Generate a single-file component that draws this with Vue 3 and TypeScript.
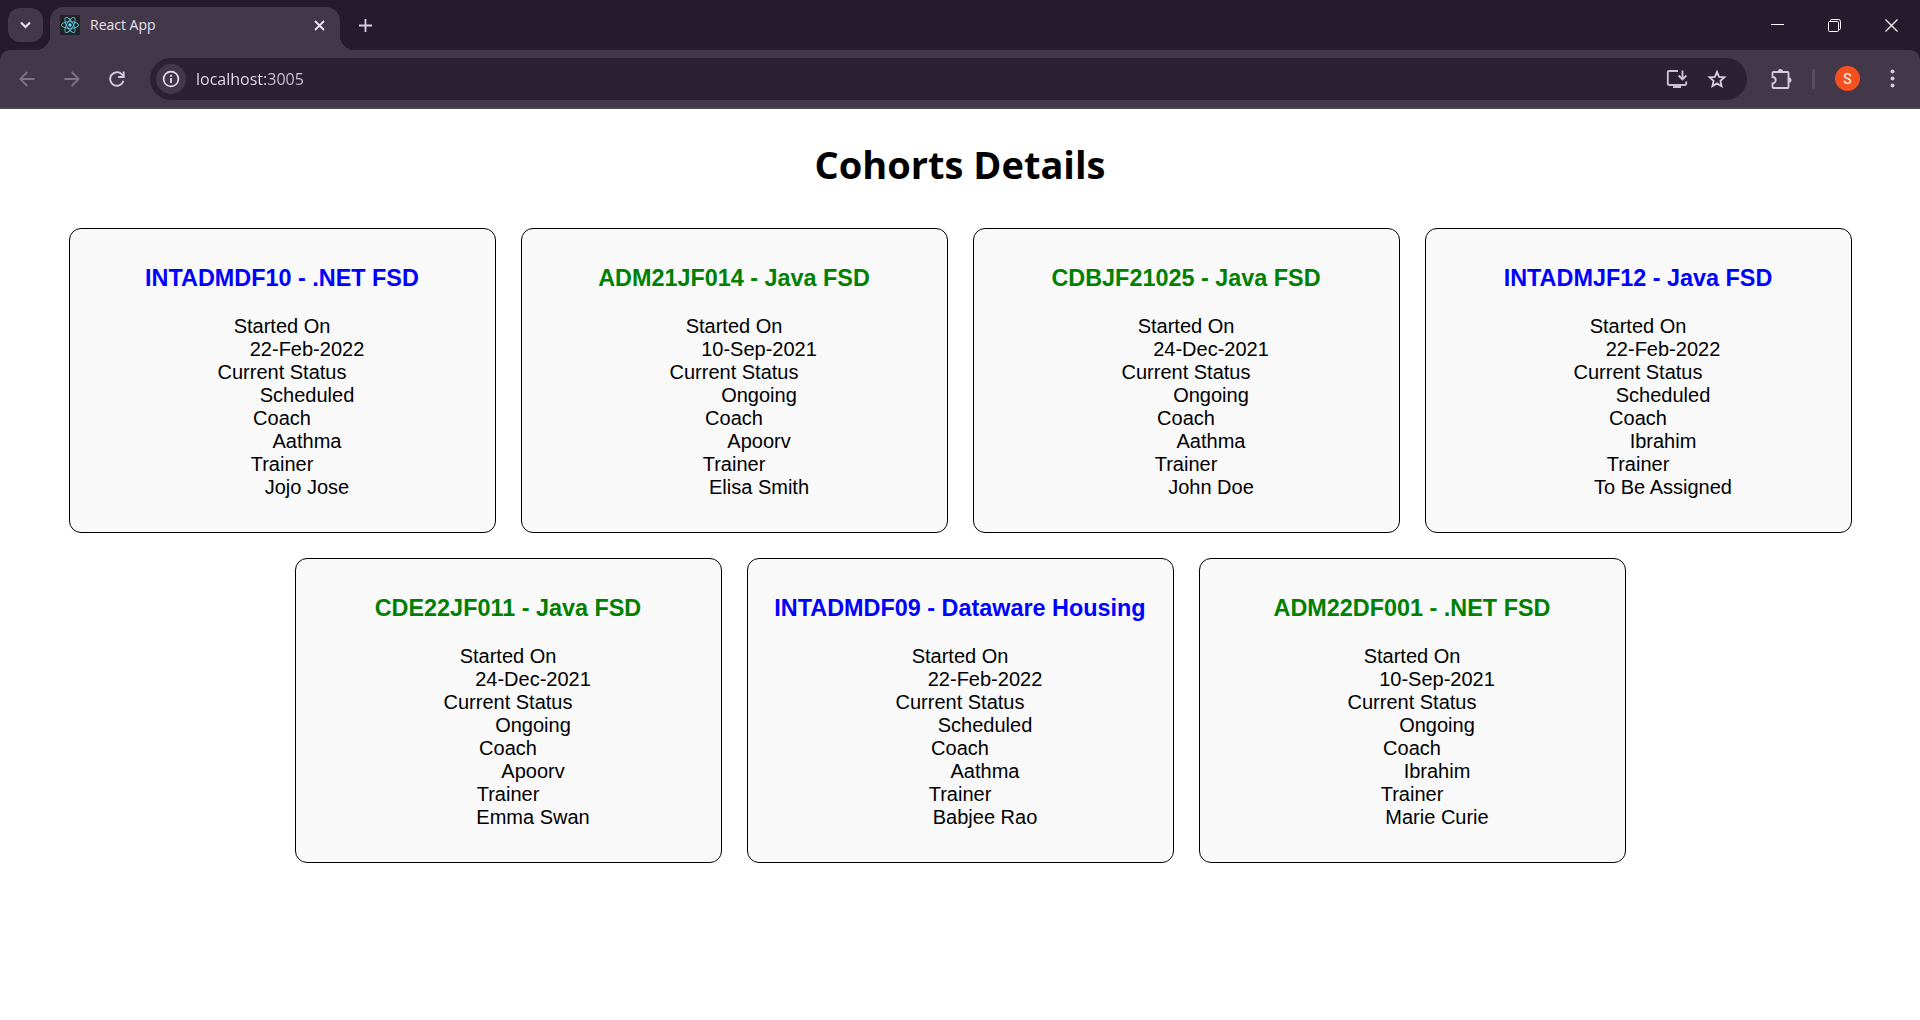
<script setup lang="ts">
import { ref } from 'vue'

interface Cohort {
  code: string
  track: string
  startedOn: string
  status: 'Ongoing' | 'Scheduled'
  coach: string
  trainer: string
}

const address = ref('localhost:3005')

const cohorts: Cohort[] = [
  { code: 'INTADMDF10', track: '.NET FSD', startedOn: '22-Feb-2022', status: 'Scheduled', coach: 'Aathma', trainer: 'Jojo Jose' },
  { code: 'ADM21JF014', track: 'Java FSD', startedOn: '10-Sep-2021', status: 'Ongoing', coach: 'Apoorv', trainer: 'Elisa Smith' },
  { code: 'CDBJF21025', track: 'Java FSD', startedOn: '24-Dec-2021', status: 'Ongoing', coach: 'Aathma', trainer: 'John Doe' },
  { code: 'INTADMJF12', track: 'Java FSD', startedOn: '22-Feb-2022', status: 'Scheduled', coach: 'Ibrahim', trainer: 'To Be Assigned' },
  { code: 'CDE22JF011', track: 'Java FSD', startedOn: '24-Dec-2021', status: 'Ongoing', coach: 'Apoorv', trainer: 'Emma Swan' },
  { code: 'INTADMDF09', track: 'Dataware Housing', startedOn: '22-Feb-2022', status: 'Scheduled', coach: 'Aathma', trainer: 'Babjee Rao' },
  { code: 'ADM22DF001', track: '.NET FSD', startedOn: '10-Sep-2021', status: 'Ongoing', coach: 'Ibrahim', trainer: 'Marie Curie' },
]
</script>

<template>
  <div class="browser">
    <header class="chrome">
      <div class="tab-strip">
        <button class="tab-search" type="button" aria-label="Search tabs">
          <svg width="11" height="8" viewBox="0 0 11 8"><path d="M1 1.5l4.5 4.5L10 1.5" fill="none" stroke="#e9dff0" stroke-width="2.2" /></svg>
        </button>
        <div class="tab">
          <svg class="favicon" width="20" height="20" viewBox="0 0 20 20">
            <rect width="20" height="20" rx="1" fill="#222324" />
            <g fill="none" stroke="#5cc4de" stroke-width="0.9">
              <ellipse cx="10" cy="10" rx="8.6" ry="3.3" />
              <ellipse cx="10" cy="10" rx="8.6" ry="3.3" transform="rotate(60 10 10)" />
              <ellipse cx="10" cy="10" rx="8.6" ry="3.3" transform="rotate(120 10 10)" />
            </g>
            <circle cx="10" cy="10" r="1.7" fill="#61dafb" />
          </svg>
          <span class="tab-title">React App</span>
          <button class="tab-close" type="button" aria-label="Close tab">
            <svg width="11" height="11" viewBox="0 0 11 11"><path d="M1 1l9 9M10 1l-9 9" fill="none" stroke="#ece6f0" stroke-width="1.8" /></svg>
          </button>
        </div>
        <button class="new-tab" type="button" aria-label="New tab">
          <svg width="13" height="13" viewBox="0 0 13 13"><path d="M6.5 0v13M0 6.5h13" fill="none" stroke="#dccbe6" stroke-width="1.8" /></svg>
        </button>
        <div class="window-controls">
          <button type="button" aria-label="Minimize">
            <svg width="13" height="13" viewBox="0 0 13 13"><path d="M0 5.5h13" stroke="#fff" /></svg>
          </button>
          <button type="button" aria-label="Restore">
            <svg width="13" height="13" viewBox="0 0 13 13" fill="none" stroke="#fff">
              <rect x="0.5" y="2.5" width="10" height="10" rx="1" />
              <path d="M2.5 2V1.5a1 1 0 0 1 1-1h7a2 2 0 0 1 2 2v7a1 1 0 0 1-1 1h-1" />
            </svg>
          </button>
          <button type="button" aria-label="Close">
            <svg width="13" height="13" viewBox="0 0 13 13"><path d="M0.5 0.5l12 12M12.5 0.5l-12 12" stroke="#fff" stroke-width="1.2" /></svg>
          </button>
        </div>
      </div>

      <div class="toolbar">
        <button class="tool" type="button" aria-label="Back">
          <svg width="16" height="16" viewBox="0 0 16 16" fill="none" stroke="#7e7487" stroke-width="1.8"><path d="M15.500 8H1.500M8.300 1L1.300 8l7 7" /></svg>
        </button>
        <button class="tool" type="button" aria-label="Forward">
          <svg width="16" height="16" viewBox="0 0 16 16" fill="none" stroke="#7e7487" stroke-width="1.8"><path d="M0.500 8h14M7.700 1l7 7-7 7" /></svg>
        </button>
        <button class="tool" type="button" aria-label="Reload">
          <svg width="16" height="16" viewBox="0 0 16 16">
            <path d="M14.500 9.800A6.800 6.800 0 1 1 12.900 3.300l1.300 1.400" fill="none" stroke="#d9c9e4" stroke-width="1.9" />
            <path d="M14.700 0.500V6H9.200" fill="none" stroke="#d9c9e4" stroke-width="1.9" />
          </svg>
        </button>

        <div class="omnibox">
          <button class="site-info" type="button" aria-label="View site information">
            <svg width="18" height="18" viewBox="0 0 18 18">
              <circle cx="9" cy="9" r="7.400" fill="none" stroke="#e6dcec" stroke-width="1.7" />
              <path d="M9 8v5M9 4.800v1.900" stroke="#e6dcec" stroke-width="1.800" />
            </svg>
          </button>
          <input v-model="address" class="address" type="text" aria-label="Address and search bar" spellcheck="false" />
          <button class="omni-action" type="button" aria-label="Install app">
            <svg width="22" height="20" viewBox="0 0 22 20" fill="none" stroke="#cbc4ce" stroke-width="1.9">
              <path d="M12 2H3a1.200 1.200 0 0 0-1.200 1.200v11.600A1.200 1.200 0 0 0 3 16h16a1.200 1.200 0 0 0 1.200-1.200V12.500" />
              <path d="M16.500 1.500v8.500M12.600 6.500l3.900 3.900 3.900-3.900" />
              <path d="M7 16h8v3H7z" fill="#cbc4ce" stroke="none" />
            </svg>
          </button>
          <button class="omni-action" type="button" aria-label="Bookmark this tab">
            <svg width="20" height="20" viewBox="0 0 20 20"><path d="M10 2.800l2.100 5 5.400.5-4.100 3.600 1.200 5.300L10 14.400l-4.600 2.800 1.200-5.300-4.100-3.600 5.400-.5z" fill="none" stroke="#d8d0dc" stroke-width="1.8" /></svg>
          </button>
        </div>

        <button class="tool extensions" type="button" aria-label="Extensions">
          <svg width="22" height="22" viewBox="0 0 22 22">
            <path d="M3.500 4h14a1 1 0 0 1 1 1v14a1 1 0 0 1-1 1h-14a1 1 0 0 1-1-1v-3.600a3.200 3.200 0 0 0 0-6.400V5a1 1 0 0 1 1-1z" fill="none" stroke="#d9c9e4" stroke-width="1.800" />
            <path d="M7.800 3.600a2.600 2.600 0 0 1 5.200 0zM18.900 9.400a2.600 2.600 0 0 1 0 5.200z" fill="#d9c9e4" />
          </svg>
        </button>
        <span class="divider"></span>
        <button class="avatar" type="button" aria-label="Profile">S</button>
        <button class="tool menu" type="button" aria-label="Menu">
          <svg width="5" height="19" viewBox="0 0 5 19" fill="#d9c9e4">
            <circle cx="2.500" cy="2.500" r="2" /><circle cx="2.500" cy="9.500" r="2" /><circle cx="2.500" cy="16.500" r="2" />
          </svg>
        </button>
      </div>
    </header>

    <main class="page">
      <h1>Cohorts Details</h1>
      <div class="cohorts">
        <article v-for="cohort in cohorts" :key="cohort.code" class="card">
          <h3 :class="cohort.status === 'Ongoing' ? 'ongoing' : 'scheduled'">{{ cohort.code }} - {{ cohort.track }}</h3>
          <dl>
            <dt>Started On</dt>
            <dd>{{ cohort.startedOn }}</dd>
            <dt>Current Status</dt>
            <dd>{{ cohort.status }}</dd>
            <dt>Coach</dt>
            <dd>{{ cohort.coach }}</dd>
            <dt>Trainer</dt>
            <dd>{{ cohort.trainer }}</dd>
          </dl>
        </article>
      </div>
    </main>
  </div>
</template>

<style>
body {
  margin: 0;
  background: #fff;
}
</style>

<style scoped>
.chrome {
  background: #241b2d;
  font-family: "Segoe UI", "Open Sans", "Noto Sans", sans-serif;
}

.chrome button {
  display: flex;
  align-items: center;
  justify-content: center;
  flex: none;
  margin: 0;
  padding: 0;
  border: 0;
  background: none;
  color: inherit;
  font: inherit;
}

.tab-strip {
  display: flex;
  align-items: center;
  height: 50px;
  padding-left: 8px;
}

.chrome .tab-search {
  width: 35px;
  height: 34px;
  border-radius: 12px;
  background: #42384a;
}

.tab {
  position: relative;
  display: flex;
  align-items: center;
  align-self: flex-end;
  box-sizing: border-box;
  width: 290px;
  height: 43px;
  margin-left: 7px;
  padding: 0 11px 7px 10px;
  border-radius: 14px 14px 0 0;
  background: #42384a;
  color: #e9e2ee;
}

.tab::before,
.tab::after {
  content: "";
  position: absolute;
  bottom: 0;
  width: 14px;
  height: 14px;
}

.tab::before {
  right: 100%;
  background: radial-gradient(circle at 0 0, transparent 14px, #42384a 14px);
}

.tab::after {
  left: 100%;
  background: radial-gradient(circle at 100% 0, transparent 14px, #42384a 14px);
}

.tab-title {
  flex: 1;
  margin-left: 10px;
  font-size: 14px;
  line-height: 20px;
}

.chrome .tab-close {
  width: 20px;
  height: 20px;
}

.chrome .new-tab {
  width: 36px;
  height: 36px;
  margin-left: 7px;
}

.window-controls {
  display: flex;
  align-self: stretch;
  margin-left: auto;
}

.chrome .window-controls button {
  width: 57px;
}

.toolbar {
  display: flex;
  align-items: center;
  box-sizing: border-box;
  height: 59px;
  padding: 0 5px 0 4px;
  border-bottom: 2px solid #4d4454;
  border-radius: 10px 10px 0 0;
  background: #42384a;
}

.chrome .tool {
  width: 45px;
  height: 36px;
}

.omnibox {
  display: flex;
  align-items: center;
  flex: 1;
  box-sizing: border-box;
  min-width: 0;
  height: 42px;
  margin-left: 11px;
  padding: 0 10px 0 6px;
  border-radius: 21px;
  background: #2a2233;
}

.chrome .site-info {
  width: 30px;
  height: 30px;
  border-radius: 50%;
  background: #42384a;
}

/* The host is brighter than the port that follows it. */
.address {
  flex: 1;
  min-width: 0;
  height: 30px;
  margin-left: 10px;
  padding: 0;
  border: 0;
  outline: 0;
  background: linear-gradient(90deg, #ebe4f0 70px, #d0c6d6 70px);
  background-clip: text;
  color: transparent;
  font: 16px/24px "Segoe UI", "Open Sans", "Noto Sans", sans-serif;
}

.chrome .omni-action {
  width: 40px;
  height: 32px;
}

.chrome .extensions {
  margin-left: 11px;
}

.divider {
  width: 3px;
  height: 20px;
  margin-left: 9px;
  border-radius: 2px;
  background: #584d60;
}

.chrome .avatar {
  width: 25px;
  height: 25px;
  margin-left: 20px;
  border-radius: 50%;
  background: #f4511e;
  color: #fff;
  font: 14px/24px Roboto, sans-serif;
}

.chrome .menu {
  margin-left: 10px;
}

.page {
  padding: 28px 10px;
  color: #000;
  font-family: "Liberation Sans", Arial, sans-serif;
  font-size: 20px;
  line-height: 23px;
  text-align: center;
}

h1 {
  margin: 0 0 37px;
  font-family: "Segoe UI", "Open Sans", "Noto Sans", sans-serif;
  font-size: 38px;
  line-height: 54px;
}

.cohorts {
  display: flex;
  flex-wrap: wrap;
  justify-content: center;
  gap: 25px;
}

.card {
  box-sizing: border-box;
  width: 427px;
  padding: 36px 25px 33px;
  border: 1px solid #000;
  border-radius: 12px;
  background: #f9f9f9;
}

h3 {
  margin: 0 0 23px;
  line-height: 27px;
}

.ongoing {
  color: green;
}

.scheduled {
  color: blue;
}

dl {
  margin: 0;
}

dd {
  margin: 0 0 0 50px;
}
</style>
